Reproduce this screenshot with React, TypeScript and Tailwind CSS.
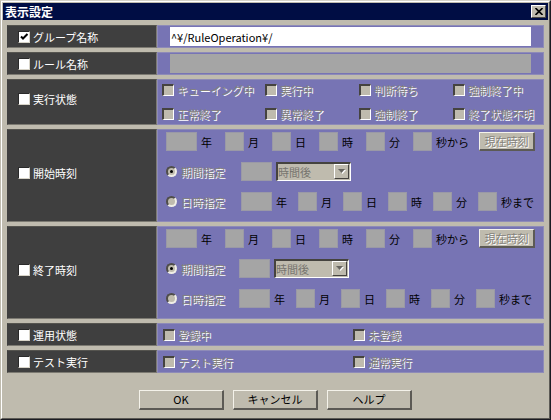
import type { ReactNode } from 'react';

const raised = 'border border-r-2 border-b-2 border-t-[#f4f2ea] border-l-[#f4f2ea] border-r-[#5c5a55] border-b-[#5c5a55] bg-[#bfbbae]';
const disabledText = 'text-[#85837c] [text-shadow:1px_1px_0_#fff]';

function Field({ label, wide = false }: { label: string; wide?: boolean }) {
  return (
    <input
      type="text"
      aria-label={label}
      disabled
      className={`h-[19px] shrink-0 border border-[#9a99a6] bg-[#a5a5a5] ${wide ? 'w-[31px]' : 'w-[19px]'}`}
    />
  );
}

function Check({ label, checked = false }: { label: string; checked?: boolean }) {
  return (
    <label className="flex items-center gap-[3px] text-white">
      <span className="relative flex">
        <input
          type="checkbox"
          defaultChecked={checked}
          className="size-3 appearance-none border border-t-[#2a2a2a] border-l-[#2a2a2a] border-r-[#d8d4c8] border-b-[#d8d4c8] bg-white"
        />
        {checked && (
          <svg viewBox="0 0 12 12" className="pointer-events-none absolute inset-0 size-3" fill="none" stroke="#000" strokeWidth="2">
            <path d="M3 5.5 L5 7.5 L9.5 3" />
          </svg>
        )}
      </span>
      {label}
    </label>
  );
}

function DisabledCheck({ label }: { label: string }) {
  return (
    <label className={`flex items-center gap-[3px] whitespace-nowrap ${disabledText}`}>
      <input
        type="checkbox"
        disabled
        className="size-3 shrink-0 appearance-none border-t-2 border-l-2 border-r border-b border-t-[#45433f] border-l-[#45433f] border-r-white border-b-white bg-[#bfbbae]"
      />
      {label}
    </label>
  );
}

function DisabledRadio({ name, label, checked = false }: { name: string; label: string; checked?: boolean }) {
  return (
    <label className={`flex shrink-0 items-center gap-1 whitespace-nowrap ${disabledText}`}>
      <span className="relative flex">
        <input
          type="radio"
          name={name}
          disabled
          defaultChecked={checked}
          className="size-[11px] appearance-none rounded-full border-2 border-t-[#4f4d49] border-l-[#4f4d49] border-r-[#f0eee6] border-b-[#f0eee6] bg-[#bfbbae]"
        />
        {checked && <span className="absolute top-1 left-1 size-[3px] rounded-full bg-black" />}
      </span>
      {label}
    </label>
  );
}

type RowProps = { label: string; checked?: boolean; tall?: boolean; children: ReactNode };

function Row({ label, checked, tall = false, children }: RowProps) {
  return (
    <section className="flex">
      <div
        className={`flex w-[150px] shrink-0 items-center border border-[#7c7a72] border-t-[#55544f] border-l-[#3f3f3f] bg-[#3f3f3f] pl-2.5 ${tall ? 'pb-1.5' : ''}`}
      >
        <Check label={label} checked={checked} />
      </div>
      <div className="min-w-0 flex-1 border border-[#8e8bb8] bg-[#7774b4]">{children}</div>
    </section>
  );
}

const units = ['年', '月', '日', '時', '分'];

function DateFields({ last, gap }: { last: string; gap: string }) {
  return (
    <div className={`flex items-center ${gap}`}>
      {units.map((unit, i) => (
        <div key={unit} className="flex items-center gap-1">
          <Field label={unit} wide={i === 0} />
          <span>{unit}</span>
        </div>
      ))}
      <div className="flex items-center gap-1 whitespace-nowrap">
        <Field label="秒" />
        <span>{last}</span>
      </div>
    </div>
  );
}

function TimeRange({ name, gap }: { name: string; gap: string }) {
  return (
    <div className="flex flex-col gap-[11px] pt-0.5 pb-2.5 pl-2">
      <div className="flex items-center gap-2.5">
        <DateFields last="秒から" gap="gap-[13px]" />
        <button type="button" disabled className={`h-[19px] w-14 shrink-0 leading-none whitespace-nowrap ${raised} ${disabledText}`}>
          現在時刻
        </button>
      </div>
      <div className={`flex items-center ${gap}`}>
        <DisabledRadio name={name} label="期間指定" checked />
        <div className="flex gap-1">
          <Field label="期間" wide />
          <div className="relative">
            <select
              aria-label="期間の単位"
              disabled
              className="block h-[19px] w-[75px] appearance-none border-2 border-r border-b border-t-[#45433f] border-l-[#45433f] border-r-white border-b-white bg-[#bfbbae] leading-none text-[#77756e] opacity-100"
            >
              <option>時間後</option>
            </select>
            <span className="pointer-events-none absolute top-0.5 right-0.5 flex h-[15px] w-[15px] items-center justify-center border border-t-white border-l-white border-r-[#45433f] border-b-[#45433f] bg-[#bfbbae]">
              <svg viewBox="0 0 8 5" className="h-[5px] w-2">
                <path d="M1 1h7L4.5 5z" fill="#fff" />
                <path d="M0 0h7L3.5 4z" fill="#66645e" />
              </svg>
            </span>
          </div>
        </div>
      </div>
      <div className={`flex items-center ${gap}`}>
        <DisabledRadio name={name} label="日時指定" />
        <DateFields last="秒まで" gap="gap-[11px]" />
      </div>
    </div>
  );
}

export default function App() {
  return (
    <main className="min-h-screen border border-t-[#d6d3c9] border-l-[#bfbbae] border-r-[#1c1c22] border-b-[#1c1c22] bg-[#bfbbae] font-['Noto_Sans_CJK_JP',sans-serif] text-[11px] leading-[12px] text-black">
      <div className="min-h-[calc(100vh-2px)] border border-t-white border-l-white border-r-[#5c5a55] border-b-[#5c5a55] p-px">
        <header className="flex h-[17px] items-center justify-between bg-[#000d44] px-0.5">
          <h1 className="text-xs leading-[14px] font-bold text-white">表示設定</h1>
          <button
            type="button"
            aria-label="閉じる"
            className="flex h-[13px] w-[15px] items-center justify-center border border-t-white border-l-white border-r-[#4a4844] border-b-[#4a4844] bg-[#bfbbae]"
          >
            <svg viewBox="0 0 8 7" className="h-[7px] w-2" stroke="#000" strokeWidth="1.6">
              <path d="M0.5 0 L7.5 7 M7.5 0 L0.5 7" />
            </svg>
          </button>
        </header>

        <div className="flex flex-col gap-1 px-1 pt-[5px]">
          <Row label="グループ名称" checked>
            <div className="px-3 py-px">
              <input
                type="text"
                aria-label="グループ名称"
                defaultValue="^¥/RuleOperation¥/"
                className="block h-[19px] w-full bg-white px-px text-black"
              />
            </div>
          </Row>
          <Row label="ルール名称">
            <div className="px-3 py-px">
              <input type="text" aria-label="ルール名称" disabled className="block h-[19px] w-full bg-[#a5a5a5] px-px" />
            </div>
          </Row>
          <Row label="実行状態" tall>
            <div className="grid grid-cols-[103px_94px_94px_1fr] gap-y-3 pt-1 pb-1 pl-1">
              <DisabledCheck label="キューイング中" />
              <DisabledCheck label="実行中" />
              <DisabledCheck label="判断待ち" />
              <DisabledCheck label="強制終了中" />
              <DisabledCheck label="正常終了" />
              <DisabledCheck label="異常終了" />
              <DisabledCheck label="強制終了" />
              <DisabledCheck label="終了状態不明" />
            </div>
          </Row>
          <Row label="開始時刻" tall>
            <TimeRange name="start" gap="gap-4" />
          </Row>
          <Row label="終了時刻" tall>
            <TimeRange name="end" gap="gap-3.5" />
          </Row>
          <Row label="運用状態">
            <div className="grid h-[21px] grid-cols-[190px_1fr] pl-[5px]">
              <DisabledCheck label="登録中" />
              <DisabledCheck label="未登録" />
            </div>
          </Row>
          <Row label="テスト実行">
            <div className="grid h-[21px] grid-cols-[190px_1fr] pl-[5px]">
              <DisabledCheck label="テスト実行" />
              <DisabledCheck label="通常実行" />
            </div>
          </Row>
        </div>

        <footer className="mt-[17px] flex justify-center gap-[9px]">
          {['OK', 'キャンセル', 'ヘルプ'].map((text) => (
            <button key={text} type="button" className={`h-5 w-[85px] leading-none ${raised}`}>
              {text}
            </button>
          ))}
        </footer>
      </div>
    </main>
  );
}
